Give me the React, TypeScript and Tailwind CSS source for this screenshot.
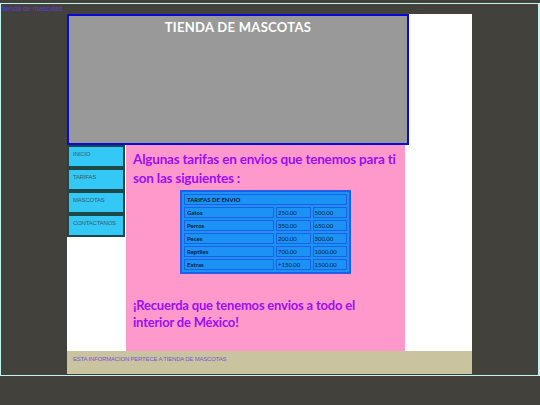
import React from 'react'

const rows = [
  ['Gatos', '250.00', '500.00'],
  ['Perros', '350.00', '650.00'],
  ['Peces', '200.00', '300.00'],
  ['Reptiles', '700.00', '1000.00'],
  ['Extras', '+150.00', '1500.00'],
]

const menu = ['INICIO', 'TARIFAS', 'MASCOTAS', 'CONTACTANOS']

const comic = { fontFamily: '"Comic Sans MS", Lato, "DejaVu Sans", sans-serif' }

export default function App() {
  return (
    <div className="h-[405px] w-[540px] overflow-hidden bg-[#43413c] pt-[3px] font-['Liberation_Sans',Arial,sans-serif]">
      <div className="h-[373px] border border-[#c4f2ee] border-r-2">
        <div className="h-[10px] pl-[1px] text-[7px] leading-[10px] text-[#5b3fd6]">tienda de mascotas</div>

        <div className="ml-[66px] w-[405px] bg-white">
          {/* cabecera */}
          <div
            className="h-[131px] w-[342px] border-2 border-[#0a0ad8] bg-[#999999] pt-[2px] text-center text-[13px] font-bold tracking-[0.3px] text-white"
            style={comic}
          >
            TIENDA DE MASCOTAS
          </div>

          <div className="flex h-[206px]">
            <nav className="w-[58px] shrink-0">
              {menu.map((item) => (
                <div
                  key={item}
                  className="h-[23px] border-2 border-[#1e4848] bg-[#33c8f6] pl-[4px] pt-[3px] text-[6px] tracking-[-0.2px] text-[#3c5a6e]"
                >
                  {item}
                </div>
              ))}
            </nav>

            <main className="ml-[1px] w-[279px] bg-[#ff99cc] pl-[7px] pt-[5px] text-[#9b0ef0]" style={comic}>
              <p className="whitespace-nowrap text-[13.5px] font-bold leading-[19px] tracking-[-0.2px]">
                Algunas tarifas en envios que tenemos para ti
                <br />
                son las siguientes :
              </p>

              <table className="ml-[47px] mt-[2px] w-[171px] border-separate border-spacing-[2px] border-2 border-[#1f5fe6] bg-[#1a93f5] text-[6px] text-[#0b1a3a]">
                <tbody>
                  <tr>
                    <td colSpan={3} className="h-[10px] border border-[#1f5fe6] pl-[2px] font-bold">
                      TARIFAS DE ENVIO
                    </td>
                  </tr>
                  {rows.map(([name, a, b]) => (
                    <tr key={name}>
                      <td className="h-[10px] w-[90px] border border-[#1f5fe6] pl-[2px] font-bold">{name}</td>
                      <td className="border border-[#1f5fe6] pl-[1px]">{a}</td>
                      <td className="border border-[#1f5fe6] pl-[1px]">{b}</td>
                    </tr>
                  ))}
                </tbody>
              </table>

              <p className="mt-[23px] whitespace-nowrap text-[13px] font-bold leading-[17px] tracking-[-0.2px]">
                ¡Recuerda que tenemos envios a todo el
                <br />
                interior de México!
              </p>
            </main>
          </div>

          <footer className="h-[23px] bg-[#cac39f] pl-[6px] pt-[4px] text-[6px] tracking-[-0.2px] text-[#7b55d4]">
            ESTA INFORMACION PERTECE A TIENDA DE MASCOTAS
          </footer>
        </div>
      </div>
    </div>
  )
}
